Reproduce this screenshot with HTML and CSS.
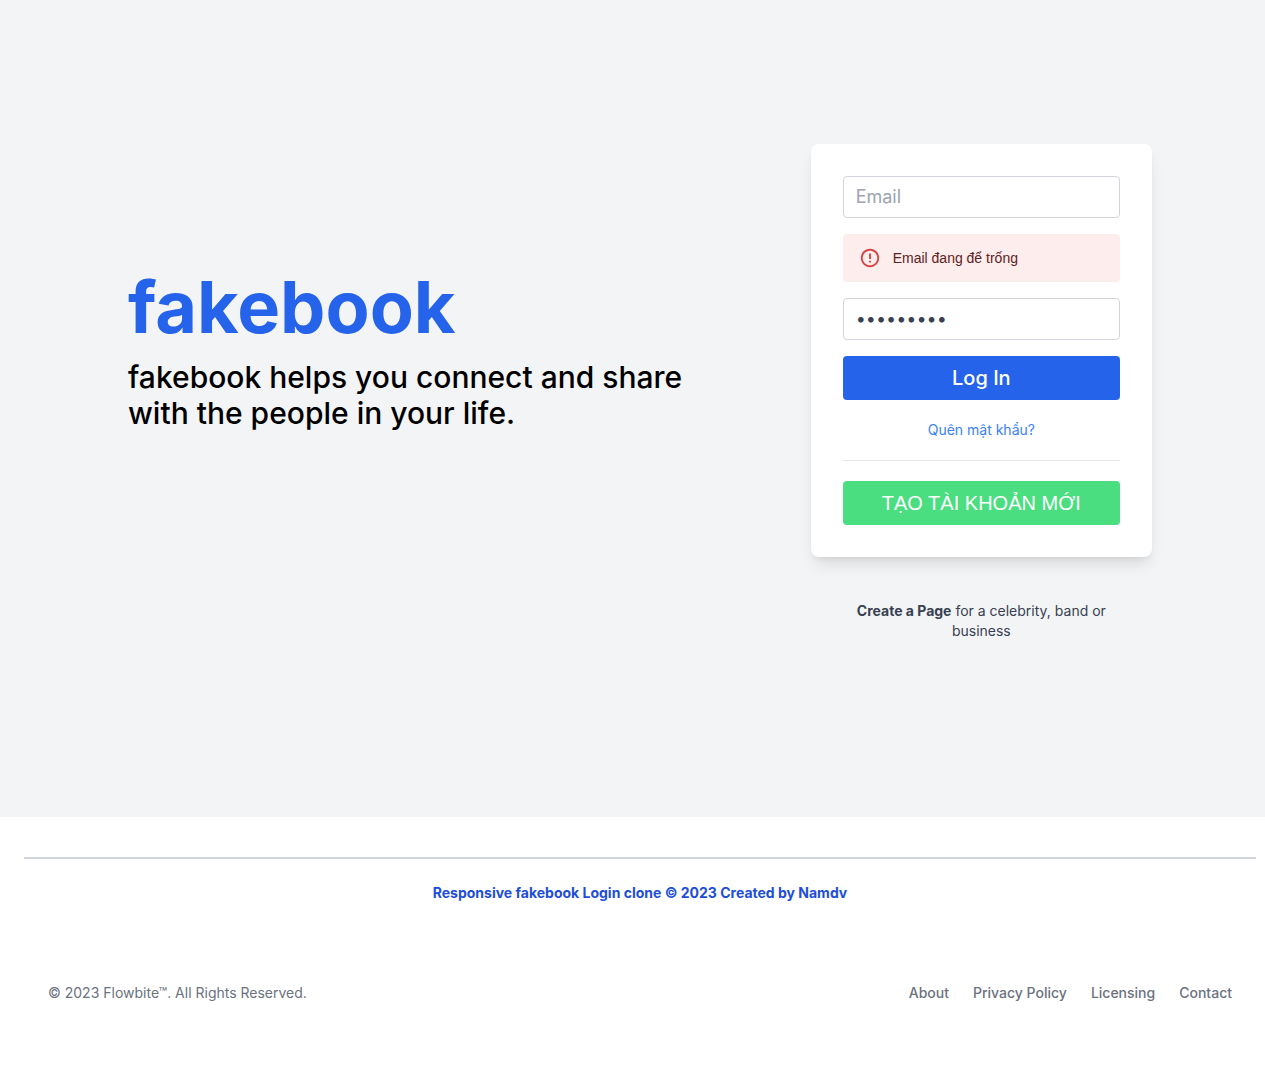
FILE: index.html
```html
<!DOCTYPE html>
<html lang="vi">
<head>
<meta charset="utf-8">
<meta name="viewport" content="width=device-width, initial-scale=1">
<title>fakebook</title>
<link rel="stylesheet" href="styles.css">
</head>
<body>
<main class="hero">
  <div class="container">
    <section class="intro">
      <h1 class="brand">fakebook</h1>
      <p class="tagline">fakebook helps you connect and share with the people in your life.</p>
    </section>
    <form class="card" novalidate>
      <input class="field" type="email" placeholder="Email" aria-label="Email">
      <div class="alert" role="alert">
        <svg class="alert-icon" viewBox="0 0 24 24" aria-hidden="true"><path d="M11 15h2v2h-2v-2zm0-8h2v6h-2V7zm.99-5C6.47 2 2 6.48 2 12s4.47 10 9.99 10C17.52 22 22 17.52 22 12S17.52 2 11.99 2zM12 20c-4.42 0-8-3.58-8-8s3.58-8 8-8 8 3.58 8 8-3.58 8-8 8z"/></svg>
        <span>Email đang để trống</span>
      </div>
      <input class="field" type="password" value="password1" aria-label="Password">
      <button class="button button-login" type="button">Log In</button>
      <a class="forgot" href="#">Quên mật khẩu?</a>
      <hr class="rule">
      <button class="button button-create" type="button">TẠO TÀI KHOẢN MỚI</button>
    </form>
    <p class="create-page"><a href="#">Create a Page</a> for a celebrity, band or business</p>
  </div>
</main>
<div class="credit">
  <a href="#">Responsive fakebook Login clone © 2023 Created by Namdv</a>
</div>
<footer class="footer">
  <span>© 2023 Flowbite™. All Rights Reserved.</span>
  <nav class="links">
    <a href="#">About</a>
    <a href="#">Privacy Policy</a>
    <a href="#">Licensing</a>
    <a href="#">Contact</a>
  </nav>
</footer>
</body>
</html>
```
FILE: styles.css
```css
*, *::before, *::after { box-sizing: border-box; }
body {
  margin: 0;
  background: #fff;
  color: #000;
  font-family: Inter, "Liberation Sans", sans-serif;
  font-size: 16px;
  line-height: 24px;
}
h1, p { margin: 0; }
a { color: inherit; text-decoration: none; }
.hero {
  padding: 144px 16px 176px 31px;
  background: #f3f4f6;
}
.container {
  display: grid;
  grid-template-columns: 2fr 1fr;
  align-items: center;
  max-width: 1024px;
  margin: 0 auto;
}
.intro { padding-right: 96px; }
.brand {
  color: #2563eb;
  font-size: 72px;
  font-weight: 700;
  line-height: 72px;
}
.tagline {
  padding-top: 16px;
  font-size: 30px;
  font-weight: 500;
  line-height: 36px;
}
.card {
  display: flex;
  flex-direction: column;
  padding: 32px;
  border-radius: 8px;
  background: #fff;
  box-shadow: 0 10px 15px -3px rgb(0 0 0 / 10%), 0 4px 6px -4px rgb(0 0 0 / 10%);
}
.field {
  width: 100%;
  height: 42px;
  margin-bottom: 16px;
  padding: 7px 12px 9px;
  border: 1px solid #d1d5db;
  border-radius: 4px;
  background: #fff;
  color: #374151;
  font: inherit;
  font-size: 18px;
}
.field::placeholder { color: #9ca3af; opacity: 1; }
.alert {
  display: flex;
  align-items: center;
  gap: 12px;
  height: 48px;
  margin-bottom: 16px;
  padding: 0 16px;
  border-radius: 4px;
  background: #fdeded;
  color: #5f2120;
  font-family: "Liberation Sans", sans-serif;
  font-size: 14px;
}
.alert-icon { width: 22px; height: 22px; fill: #d32f2f; opacity: 0.9; }
.button {
  height: 44px;
  padding: 8px;
  border: 0;
  border-radius: 4px;
  color: #fff;
  font: inherit;
  font-size: 20px;
  line-height: 28px;
  cursor: pointer;
}
.button-login { background: #2563eb; font-weight: 500; }
.button-create { background: #4ade80; font-family: "Liberation Sans", sans-serif; }
.forgot {
  margin: 20px 0;
  color: #3b82f6;
  font-size: 14px;
  line-height: 20px;
  text-align: center;
}
.rule {
  width: 100%;
  margin: 0 0 20px;
  border: 0;
  border-top: 1px solid #e5e7eb;
}
.create-page {
  grid-column: 2;
  padding: 44px 32px 0;
  color: #374151;
  font-size: 14px;
  line-height: 20px;
  text-align: center;
}
.create-page a { font-weight: 700; }
.credit {
  margin: 40px 9px 0 24px;
  padding: 24px 0;
  border-top: 2px solid #d1d5db;
  color: #1d4ed8;
  font-size: 14px;
  font-weight: 700;
  line-height: 20px;
  text-align: center;
}
.footer {
  display: flex;
  align-items: center;
  justify-content: space-between;
  padding: 56px 33px 76px 48px;
  color: #6b7280;
  font-size: 14px;
  line-height: 20px;
}
.links { display: flex; gap: 24px; font-weight: 500; }
```
